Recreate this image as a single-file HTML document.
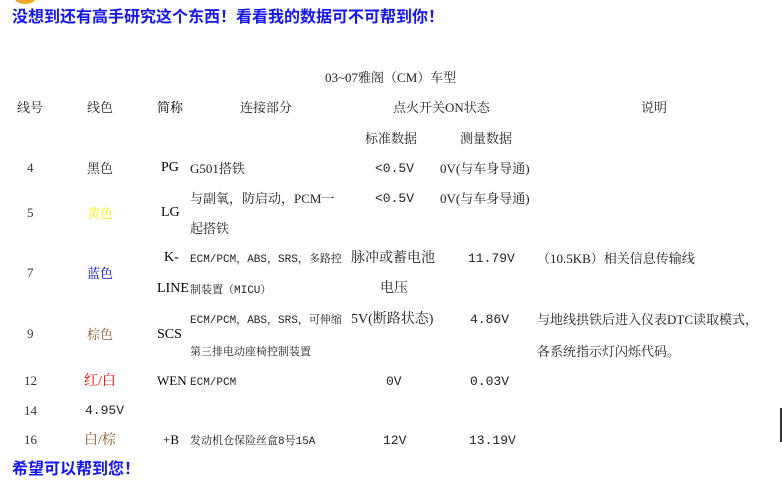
<!DOCTYPE html>
<html><head><meta charset="utf-8"><style>
html,body{margin:0;padding:0;background:#fff;width:782px;height:485px;overflow:hidden;position:relative}
body{font-family:"Liberation Serif","Noto Serif CJK SC",serif;color:#222;font-size:13px}
.a{position:absolute;white-space:nowrap;line-height:16px}
.s{font-family:"Liberation Serif","Noto Serif CJK SC",serif}
.m{font-family:"Liberation Mono","Noto Serif CJK SC",monospace;font-size:11px}
.b{font-weight:bold;color:#1414ff;font-size:16px;line-height:20px;font-family:"Liberation Sans","Noto Sans CJK SC",sans-serif}
.n{color:#333;font-family:"Liberation Serif",serif;font-size:13px}
</style></head><body>
<div style="position:absolute;left:14px;top:-10px;width:22px;height:14px;border-radius:50%;background:#f5a623"></div>
<div class="a b" style="left:12px;top:8px">没想到还有高手研究这个东西！看看我的数据可不可帮到你！</div>
<div class="a" style="left:325px;top:70px">03~07雅阁（CM）车型</div>

<div class="a" style="left:17px;top:100px">线号</div>
<div class="a" style="left:87px;top:100px">线色</div>
<div class="a" style="left:157px;top:100px;color:#000">简称</div>
<div class="a" style="left:240px;top:100px">连接部分</div>
<div class="a" style="left:393px;top:100px">点火开关ON状态</div>
<div class="a" style="left:641px;top:100px">说明</div>
<div class="a" style="left:365px;top:131px">标准数据</div>
<div class="a" style="left:460px;top:131px">测量数据</div>

<div class="a n" style="left:27px;top:160px">4</div>
<div class="a" style="left:87px;top:161px">黑色</div>
<div class="a s" style="left:161px;top:160px;font-size:14px;color:#000">PG</div>
<div class="a" style="left:190px;top:161px">G501搭铁</div>
<div class="a m" style="left:375px;top:161px;font-size:13px">&lt;0.5V</div>
<div class="a" style="left:440px;top:161px">0V(与车身导通)</div>

<div class="a n" style="left:27px;top:205px">5</div>
<div class="a" style="left:87px;top:206px;color:#ffee00">黄色</div>
<div class="a s" style="left:161px;top:205px;font-size:14px;color:#000">LG</div>
<div class="a" style="left:190px;top:191px">与副氧，防启动，PCM一</div>
<div class="a" style="left:190px;top:221px">起搭铁</div>
<div class="a m" style="left:375px;top:191px;font-size:13px">&lt;0.5V</div>
<div class="a" style="left:440px;top:191px">0V(与车身导通)</div>

<div class="a n" style="left:27px;top:265px">7</div>
<div class="a" style="left:87px;top:266px;color:#0000ee">蓝色</div>
<div class="a s" style="left:164px;top:250px;font-size:14px;color:#000">K-</div>
<div class="a s" style="left:157px;top:281px;font-size:14px;color:#000">LINE</div>
<div class="a m" style="left:190px;top:252px">ECM/PCM，ABS，SRS，多路控</div>
<div class="a m" style="left:190px;top:283px">制装置（MICU）</div>
<div class="a" style="left:351px;top:251px;font-size:14px">脉冲或蓄电池</div>
<div class="a" style="left:380px;top:281px;font-size:14px">电压</div>
<div class="a m" style="left:468px;top:251px;font-size:13px">11.79V</div>
<div class="a" style="left:537px;top:251px">（10.5KB）相关信息传输线</div>

<div class="a n" style="left:27px;top:326px">9</div>
<div class="a" style="left:87px;top:327px;color:#8b5a2b">棕色</div>
<div class="a s" style="left:157px;top:327px;font-size:14px;color:#000">SCS</div>
<div class="a m" style="left:190px;top:313px">ECM/PCM，ABS，SRS，可伸缩</div>
<div class="a m" style="left:190px;top:345px">第三排电动座椅控制装置</div>
<div class="a" style="left:351px;top:312px;font-size:14px">5V(断路状态)</div>
<div class="a m" style="left:470px;top:312px;font-size:13px">4.86V</div>
<div class="a" style="left:537px;top:312px">与地线拱铁后进入仪表DTC读取模式，</div>
<div class="a" style="left:537px;top:344px">各系统指示灯闪烁代码。</div>

<div class="a n" style="left:24px;top:373px">12</div>
<div class="a" style="left:84px;top:374px;color:#ff0000;font-size:14px">红/白</div>
<div class="a s" style="left:157px;top:373px;font-size:13px;color:#000">WEN</div>
<div class="a m" style="left:190px;top:375px">ECM/PCM</div>
<div class="a m" style="left:386px;top:374px;font-size:13px">0V</div>
<div class="a m" style="left:470px;top:374px;font-size:13px">0.03V</div>

<div class="a n" style="left:24px;top:403px">14</div>
<div class="a m" style="left:85px;top:403px;font-size:13px">4.95V</div>

<div class="a n" style="left:24px;top:432px">16</div>
<div class="a" style="left:84px;top:433px;color:#8b5a2b;font-size:14px">白/棕</div>
<div class="a s" style="left:163px;top:432px;font-size:13px;color:#000">+B</div>
<div class="a m" style="left:190px;top:434px">发动机仓保险丝盒8号15A</div>
<div class="a m" style="left:383px;top:433px;font-size:13px">12V</div>
<div class="a m" style="left:469px;top:433px;font-size:13px">13.19V</div>

<div class="a b" style="left:12px;top:460px">希望可以帮到您！</div>
<div style="position:absolute;left:780px;top:408px;width:2px;height:34px;background:#333"></div>
</body></html>
